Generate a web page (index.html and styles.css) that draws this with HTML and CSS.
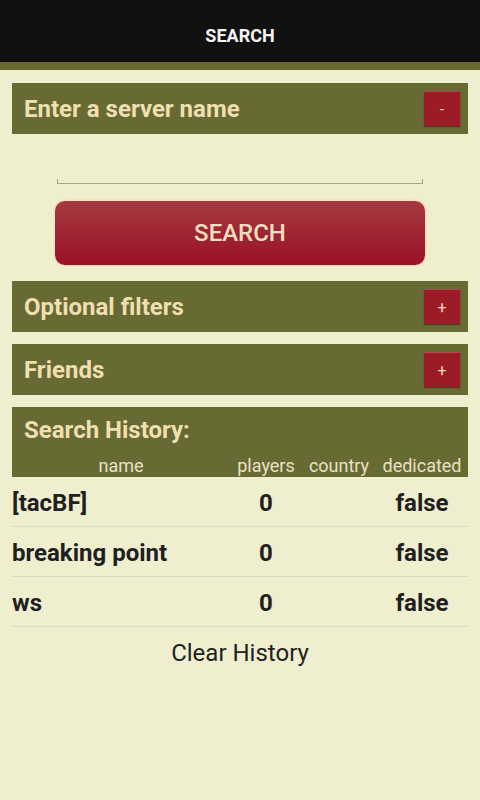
FILE: index.html
```html
<!DOCTYPE html>
<html>
<head>
<meta charset="utf-8">
<link rel="stylesheet" href="styles.css">
</head>
<body>
<header class="topbar"><span class="title">SEARCH</span></header>
<div class="stripe"></div>
<main class="content">
  <section class="panel">
    <span class="panel-title">Enter a server name</span>
    <span class="toggle">-</span>
  </section>
  <div class="input-wrap"><div class="input-line"></div></div>
  <div class="btn-wrap"><button class="search-btn">SEARCH</button></div>
  <section class="panel panel-filters">
    <span class="panel-title">Optional filters</span>
    <span class="toggle">+</span>
  </section>
  <section class="panel panel-friends">
    <span class="panel-title">Friends</span>
    <span class="toggle">+</span>
  </section>
  <section class="history">
    <div class="history-title">Search History:</div>
    <div class="grid head">
      <span>name</span><span>players</span><span>country</span><span>dedicated</span>
    </div>
  </section>
  <div class="grid row"><span class="name">[tacBF]</span><span>0</span><span></span><span>false</span></div>
  <div class="grid row"><span class="name">breaking point</span><span>0</span><span></span><span>false</span></div>
  <div class="grid row"><span class="name">ws</span><span>0</span><span></span><span>false</span></div>
  <div class="clear">Clear History</div>
</main>
</body>
</html>
```
FILE: styles.css
```css
* { box-sizing: border-box; }
html, body { margin: 0; padding: 0; }
body {
  width: 480px;
  height: 800px;
  background: #efefcf;
  font-family: Roboto, "Noto Sans", sans-serif;
  overflow: hidden;
}
.topbar {
  height: 62px;
  background: #111112;
  display: flex;
  align-items: center;
  justify-content: center;
}
.title {
  color: #f4f4f4;
  font-size: 18px;
  font-weight: 700;
  margin-top: 9px;
}
.stripe {
  height: 8px;
  background: #67672f;
}
.content {
  padding: 13px 12px 0;
  display: flex;
  flex-direction: column;
}
.panel {
  height: 51px;
  background: #686a34;
  display: flex;
  align-items: center;
  justify-content: space-between;
  padding: 0 8px 0 12px;
}
.panel-title {
  color: #efdfb1;
  font-size: 24px;
  font-weight: 700;
}
.toggle {
  width: 36px;
  height: 35px;
  background: #9b1c26;
  border-top: 1px solid #b8484c;
  box-shadow: 0 1px 1px rgba(40,20,10,0.5);
  color: #f0d8c0;
  font-size: 16px;
  display: flex;
  align-items: center;
  justify-content: center;
}
.input-wrap {
  height: 51px;
  padding: 45px 45px 0;
}
.input-line {
  height: 5px;
  border: 1px solid #a6a686;
  border-top: none;
}
.btn-wrap {
  padding: 15px 42px 0 42px;
}
.search-btn {
  width: 100%;
  height: 66px;
  border: 1px solid #f6e4c0;
  border-radius: 11px;
  background: linear-gradient(#a53a42, #9a1125);
  box-shadow: 0 0 0 1px #f3e4c4;
  color: #f3dfc0;
  font-family: Roboto, sans-serif;
  font-size: 24px;
  font-weight: 500;
  padding: 0;
  display: block;
}
.panel-filters { margin-top: 15px; }
.panel-friends { margin-top: 12px; }
.history {
  margin-top: 12px;
  background: #686a34;
  height: 70px;
}
.history-title {
  color: #efdfb1;
  font-size: 24px;
  font-weight: 700;
  padding: 9px 0 0 12px;
  height: 48px;
  line-height: 28px;
}
.grid {
  display: grid;
  grid-template-columns: 218px 72px 74px 1fr;
  text-align: center;
}
.head {
  color: #e9e1c3;
  font-size: 18px;
  line-height: 22px;
  height: 22px;
}
.row {
  height: 50px;
  padding-top: 3px;
  align-items: center;
  border-bottom: 1px solid #dcdcbf;
  color: #202020;
  font-size: 24px;
  font-weight: 700;
}
.row:first-of-type { margin-top: 1px; }
.row .name { text-align: left; }
.clear {
  height: 52px;
  display: flex;
  align-items: center;
  justify-content: center;
  color: #222;
  font-size: 24px;
}
```
